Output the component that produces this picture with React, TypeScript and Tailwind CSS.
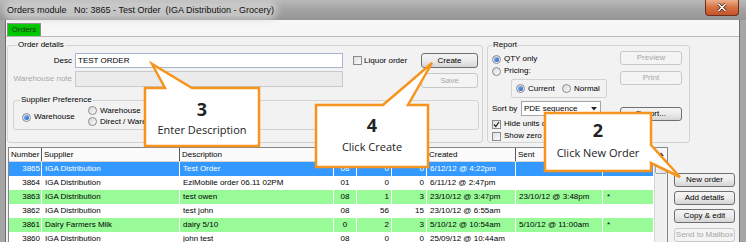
import clsx from "clsx";

const ui = "font-['Liberation_Sans',Arial,sans-serif] text-[8px] leading-[10px] text-black";
const callFont = "font-['Open_Sans','Noto_Sans',sans-serif]";

function Radio({ checked = false }: { checked?: boolean }) {
  return (
    <span className="flex h-[9px] w-[9px] shrink-0 items-center justify-center rounded-full border border-[#8b8b8b] bg-gradient-to-br from-[#d9d9d9] to-[#fbfbfb]">
      {checked && <span className="h-[5px] w-[5px] rounded-full bg-gradient-to-br from-[#8cc2ff] to-[#1552c4]" />}
    </span>
  );
}

function Check({ checked = false }: { checked?: boolean }) {
  return (
    <span className="flex h-[9px] w-[9px] shrink-0 items-center justify-center border border-[#8b8b8b] bg-gradient-to-br from-[#dedede] to-[#fbfbfb]">
      {checked && (
        <svg width="7" height="7" viewBox="0 0 7 7">
          <path d="M1 3.5 L2.8 5.5 L6 1" fill="none" stroke="#222" strokeWidth="1.2" />
        </svg>
      )}
    </span>
  );
}

function Btn({ children, disabled = false, className }: { children: React.ReactNode; disabled?: boolean; className?: string }) {
  return (
    <div
      className={clsx(
        "flex shrink-0 items-center justify-center rounded-[3px] border",
        disabled
          ? "border-[#c5c9cc] bg-[#f4f4f4] text-[#a6a6a6]"
          : "border-[#707070] bg-gradient-to-b from-[#f4f4f4] via-[#ebebeb] to-[#d5d5d5] text-black",
        className
      )}
    >
      {children}
    </div>
  );
}

const cols = "grid grid-cols-[33px_138px_154px_23px_35px_35px_89px_87px_51px]";

const rows = [
  { n: "3865", s: "IGA Distribution", d: "Test Order", a: "08", b: "0", c: "0", cr: "6/12/12 @ 4:22pm", se: "", x: "", kind: "sel" },
  { n: "3864", s: "IGA Distribution", d: "EziMobile order 06.11 02PM", a: "01", b: "0", c: "0", cr: "6/11/12 @ 2:47pm", se: "", x: "", kind: "plain" },
  { n: "3863", s: "IGA Distribution", d: "test owen", a: "08", b: "1", c: "3", cr: "23/10/12 @ 3:47pm", se: "23/10/12 @ 3:48pm", x: "*", kind: "sent" },
  { n: "3862", s: "IGA Distribution", d: "test john", a: "08", b: "56", c: "15", cr: "23/10/12 @ 6:55am", se: "", x: "", kind: "plain" },
  { n: "3861", s: "Dairy Farmers Milk", d: "dairy 5/10", a: "0", b: "2", c: "3", cr: "5/10/12 @ 10:54am", se: "5/10/12 @ 11:00am", x: "*", kind: "sent" },
  { n: "3860", s: "IGA Distribution", d: "john test", a: "08", b: "0", c: "0", cr: "25/09/12 @ 10:44am", se: "", x: "", kind: "plain" },
];

function Callouts() {
  return (
    <div className="pointer-events-none absolute inset-0">
      <svg width="746" height="242" className="absolute inset-0">
        <g fill="#fff" stroke="#f7941d" strokeWidth="2.5" strokeLinejoin="miter">
          <path d="M145 88 L165 88 L152 64 L192 88 L259 88 L259 146 L145 146 Z" />
          <path d="M316 105 L383 105 L432 63 L408 105 L428 105 L428 167 L316 167 Z" />
          <path d="M545 113 L651 113 L651 145 L680 177 L651 163 L651 171 L545 171 Z" />
        </g>
      </svg>
      <div className={clsx("absolute left-[146px] top-[88px] flex w-[112px] flex-col items-center pt-[11px] text-[#222]", callFont)}>
        <span className="text-[18px] font-bold leading-[20px]">3</span>
        <span className="mt-[4px] text-[11px] leading-[14px]">Enter Description</span>
      </div>
      <div className={clsx("absolute left-[317px] top-[105px] flex w-[110px] flex-col items-center pt-[10px] text-[#222]", callFont)}>
        <span className="text-[18px] font-bold leading-[20px]">4</span>
        <span className="mt-[5px] text-[11px] leading-[14px]">Click Create</span>
      </div>
      <div className={clsx("absolute left-[546px] top-[113px] flex w-[104px] flex-col items-center pt-[7px] text-[#222]", callFont)}>
        <span className="text-[18px] font-bold leading-[20px]">2</span>
        <span className="mt-[6px] text-[11px] leading-[14px]">Click New Order</span>
      </div>
    </div>
  );
}

export default function App() {
  return (
    <div className={clsx("relative h-[242px] w-[746px] overflow-hidden bg-[#a4a4a4]", ui)}>
      {/* title bar */}
      <div className="relative flex h-[20px] items-center bg-gradient-to-b from-[#b9b9b9] via-[#a2a2a2] to-[#959595] pl-[7px]">
        <span className="whitespace-pre rounded-[6px] bg-[#d4d4d4]/70 text-[9px] leading-[12px] text-[#111] shadow-[0_0_6px_4px_rgba(212,212,212,0.7)]">
          {"Orders module   No: 3865 - Test Order  (IGA Distribution - Grocery)"}
        </span>
        <div className="absolute right-[7px] top-0 flex h-[16px] w-[34px] items-center justify-center rounded-b-[4px] border border-t-0 border-[#6b2f1a] bg-gradient-to-b from-[#eab08c] via-[#d6703f] to-[#c4542a]">
          <svg width="10" height="9" viewBox="0 0 10 9">
            <path d="M1.5 1 L8.5 8 M8.5 1 L1.5 8" stroke="#3a1a10" strokeWidth="3" />
            <path d="M1.5 1 L8.5 8 M8.5 1 L1.5 8" stroke="#fff" strokeWidth="1.6" />
          </svg>
        </div>
      </div>

      <div className="flex h-[222px]">
        <div className="w-[6px] border-r border-[#6f6f6f] bg-[#a6a6a6]" />
        <div className="flex w-[733px] flex-col bg-[#f2f2f2]">
          {/* tabs */}
          <div className="flex h-[17px] border-b border-[#b9b9b9] bg-[#f7f7f7]">
            <div className="ml-[1px] mt-[3px] flex h-[13px] w-[34px] items-center justify-center border border-b-0 border-[#8a8a8a] bg-[#00c800] text-[#1b3a1b]">
              Orders
            </div>
          </div>

          {/* form */}
          <div className="flex h-[106px] pt-[3px]">
            <fieldset className="ml-[1px] h-[103px] w-[476px] rounded-[3px] border border-[#d3d3d3]">
              <legend className="ml-[9px] px-[1px]">Order details</legend>
              <div className="mt-[3px] flex items-start">
                <span className="w-[64px] text-right leading-[15px]">Desc</span>
                <div className="ml-[3px] h-[15px] w-[268px] border border-[#a9b5cf] bg-white pl-[2px] leading-[13px]">TEST ORDER</div>
                <div className="ml-[10px] flex h-[15px] w-[68px] items-center gap-[2px]">
                  <Check />
                  <span>Liquor order</span>
                </div>
                <Btn className="h-[15px] w-[57px]">Create</Btn>
              </div>
              <div className="mt-[3px] flex items-start">
                <span className="w-[64px] text-right leading-[16px] text-[#a8a8a8]">Warehouse note</span>
                <div className="ml-[3px] h-[16px] w-[268px] border border-[#c9c9c9] bg-[#ebebeb]" />
                <Btn disabled className="ml-[78px] mt-[2px] h-[15px] w-[57px]">Save</Btn>
              </div>
              <fieldset className="ml-[5px] mt-[7px] h-[35px] w-[466px] rounded-[3px] border border-[#d3d3d3]">
                <legend className="ml-[6px] px-[1px]">Supplier Preference</legend>
                <div className="flex h-[24px]">
                  <div className="ml-[8px] flex w-[66px] items-center gap-[3px]">
                    <Radio checked />
                    <span>Warehouse</span>
                  </div>
                  <div className="flex flex-col">
                    <div className="flex h-[11px] items-center gap-[3px]">
                      <Radio />
                      <span>Warehouse</span>
                    </div>
                    <div className="flex h-[11px] items-center gap-[3px]">
                      <Radio />
                      <span>Direct / Warehouse</span>
                    </div>
                  </div>
                </div>
              </fieldset>
            </fieldset>

            <fieldset className="ml-[4px] h-[103px] w-[203px] rounded-[3px] border border-[#d3d3d3]">
              <legend className="ml-[4px] px-[1px]">Report</legend>
              <div className="flex">
                <div className="w-[128px] pl-[4px]">
                  <div className="mt-[3px] flex h-[12px] items-center gap-[3px]">
                    <Radio checked />
                    <span>QTY only</span>
                  </div>
                  <div className="flex h-[12px] items-center gap-[3px]">
                    <Radio />
                    <span>Pricing:</span>
                  </div>
                  <div className="ml-[19px] mt-[2px] flex h-[19px] w-[96px] items-center rounded-[2px] border border-[#d3d3d3] pl-[4px]">
                    <div className="flex w-[46px] items-center gap-[3px]">
                      <Radio checked />
                      <span>Current</span>
                    </div>
                    <div className="flex items-center gap-[3px]">
                      <Radio />
                      <span>Normal</span>
                    </div>
                  </div>
                  <div className="mt-[3px] flex items-center">
                    <span className="w-[29px]">Sort by</span>
                    <div className="flex h-[15px] w-[80px] items-center justify-between border border-[#a5a5a5] bg-white pl-[2px] pr-[3px]">
                      <span>PDE sequence</span>
                      <svg width="6" height="4" viewBox="0 0 6 4">
                        <path d="M0 0 L6 0 L3 3.5 Z" fill="#222" />
                      </svg>
                    </div>
                  </div>
                  <div className="mt-[2px] flex h-[12px] items-center gap-[3px]">
                    <Check checked />
                    <span className="whitespace-nowrap">Hide units on order</span>
                  </div>
                  <div className="flex h-[12px] items-center gap-[3px]">
                    <Check />
                    <span className="whitespace-nowrap">Show zero qty</span>
                  </div>
                </div>
                <div className="ml-[4px] flex flex-col">
                  <Btn disabled className="mt-[1px] h-[14px] w-[62px]">Preview</Btn>
                  <Btn disabled className="mt-[6px] h-[14px] w-[62px]">Print</Btn>
                  <Btn className="mt-[22px] h-[14px] w-[62px]">Export...</Btn>
                </div>
              </div>
            </fieldset>
          </div>

          {/* orders list */}
          <div className="mt-[4px] flex">
            <div className="ml-[2px] flex h-[110px] w-[660px] border border-[#828790] bg-white">
              <div className="w-[645px]">
                <div className={clsx(cols, "h-[14px] border-b border-[#d5d5d5] bg-[#fbfbfb] leading-[13px]")}>
                  {["Number", "Supplier", "Description", "", "", "", "Created", "Sent", ""].map((h, i) => (
                    <div key={i} className="truncate border-r border-[#5a5a5a] pl-[2px]">{h}</div>
                  ))}
                </div>
                {rows.map((r) => (
                  <div
                    key={r.n}
                    className={clsx(
                      cols,
                      "h-[14px] leading-[13px]",
                      r.kind === "sel" && "bg-[#3399ff] text-white",
                      r.kind === "sent" && "bg-[#98fb98]"
                    )}
                  >
                    <div className="border-r border-white pr-[1px] text-right">{r.n}</div>
                    <div className="truncate border-r border-white pl-[3px]">{r.s}</div>
                    <div className="truncate border-r border-white pl-[3px]">{r.d}</div>
                    <div className="border-r border-white text-center">{r.a}</div>
                    <div className="border-r border-white pr-[2px] text-right">{r.b}</div>
                    <div className="border-r border-white pr-[2px] text-right">{r.c}</div>
                    <div className="truncate border-r border-white pl-[3px]">{r.cr}</div>
                    <div className="truncate border-r border-white pl-[3px]">{r.se}</div>
                    <div className="border-r border-white pl-[4px]">{r.x}</div>
                  </div>
                ))}
              </div>
              <div className="flex w-[13px] flex-col border-l border-[#d5d5d5] bg-[#f0f0f0]">
                <div className="flex h-[13px] items-center justify-center border-b border-[#d5d5d5] bg-[#f7f7f7]">
                  <svg width="6" height="4" viewBox="0 0 6 4">
                    <path d="M0 4 L6 4 L3 0.5 Z" fill="#333" />
                  </svg>
                </div>
                <div className="h-[13px] rounded-[2px] border border-[#a2a2a2] bg-gradient-to-r from-[#f2f2f2] to-[#dcdcdc]" />
              </div>
            </div>
            <div className="ml-[6px] flex flex-col pt-[26px]">
              <Btn className="h-[14px] w-[61px]">New order</Btn>
              <Btn className="mt-[4px] h-[14px] w-[61px]">Add details</Btn>
              <Btn className="mt-[4px] h-[14px] w-[61px]">Copy &amp; edit</Btn>
              <Btn disabled className="mt-[5px] h-[14px] w-[61px]">Send to Mailbox</Btn>
            </div>
          </div>
        </div>
        <div className="w-[7px] border-l border-[#6f6f6f] bg-[#a6a6a6]" />
      </div>

      <Callouts />
    </div>
  );
}
